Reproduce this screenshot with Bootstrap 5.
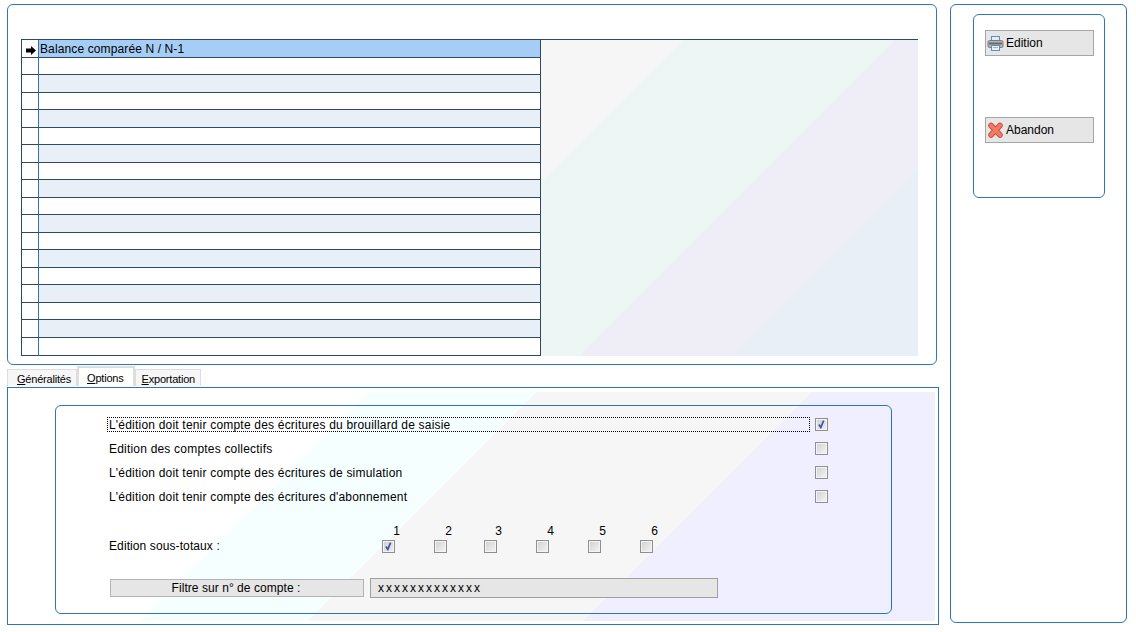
<!DOCTYPE html>
<html lang="fr">
<head>
<meta charset="utf-8">
<title>Balance comparée</title>
<link href="https://cdn.jsdelivr.net/npm/bootstrap@5.3.0/dist/css/bootstrap.min.css" rel="stylesheet">
<style>
html,body{width:1136px;height:632px;overflow:hidden;background:#fff}
body{font-family:"Liberation Sans",Arial,sans-serif;font-size:12px;line-height:14px;color:#000}
.app-shell{height:632px;padding:4px 0 0 7px}
.left-col{width:932px}
.frame-blue{border:1px solid #2e75b6;border-radius:6px}
.top-panel{width:930px;height:361px;padding:34px 18px 0 13px}
.grid-area{border-top:1px solid #2f4a5c;width:897px;height:317px}
.list-grid{width:520px;border-collapse:separate;border-spacing:0;table-layout:fixed;height:316px;border-left:1px solid #2f4a5c;border-right:1px solid #2f4a5c}
.list-grid td{padding:0 0 0 1px;border-bottom:1px solid #2f4a5c;height:18px;font-size:12px;line-height:16px;letter-spacing:.12px;white-space:nowrap;overflow:hidden}
.list-grid tr:nth-child(even) td{height:17px}
.list-grid tr:last-child td{height:18px}
.list-grid td.marker{width:17px;padding:0;border-right:1px solid #2e75b6;text-align:center;background:#fff}
.list-grid tr:nth-child(odd):not(:first-child) td:last-child{background:#e8eff7}
.list-grid tr:first-child td:last-child{background:#a5cdf5}
.marker svg{display:block;margin:3px 0 0 4px}
.top-deco{flex:1;height:316px;background:linear-gradient(135deg,#f6f6f6 20.6%,#eef6f5 20.6%,#eef6f5 51.1%,#efeef7 51.1%,#efeef7 73%,#e8eff7 73%)}
.tab-strip{height:23px;padding-top:3px;border:0;margin:0}
.tab-strip .nav-link{font-size:11px;line-height:13px;color:#000;padding:3px 5px 0 9px;height:17px;margin:0;margin-top:1px;border:1px solid #ddd;border-bottom:0;border-radius:0;background:#f6f6f6;letter-spacing:-.2px}
.tab-strip .nav-link.active{height:20px;margin-top:-2px;padding:4px 9px 0 8px;background:#fff;color:#000;border:2px solid #ddd;border-bottom:0;position:relative;z-index:2}
.tab-strip .nav-item:last-child .nav-link{padding:3px 5px 0 6px}
.tab-body{width:932px;height:238px;border:1px solid #2e75b6;padding:4px 3px 3px 0;margin-top:-1px;border-radius:0;position:relative}
.tab-deco{height:229px;padding:13px 0 0 47px;background:linear-gradient(135deg,#fff 31.3%,#f5ffff 31.3%,#f5ffff 45.7%,#f6f6f6 45.7%,#f6f6f6 69.6%,#efefff 69.6%)}
.opt-group{width:837px;height:209px;padding:11px 0 0 51px}
.opt-row{height:24px;width:722px;display:flex;align-items:flex-start}
.opt-label{width:703px;height:15px;padding:0 0 0 1px;line-height:14px;letter-spacing:.2px;border:1px dotted transparent;white-space:nowrap}
.opt-label.has-focus{border-color:#000}
.opt-box.form-check-input{width:13px;height:13px;margin:1px 0 0 5px;flex:none}
.opt-box.form-check-input,.sub-cell .form-check-input{border:1px solid #8f8f8f;border-radius:0;background-color:#e8e8e8;background-image:linear-gradient(135deg,#cfcfcf,#f6f6f6);box-shadow:inset 0 0 0 1px #f4f4f4;opacity:1}
.opt-box.form-check-input:checked,.sub-cell .form-check-input:checked{background-color:#e8e8e8;border-color:#8f8f8f;background-image:url("data:image/svg+xml,%3Csvg xmlns='http://www.w3.org/2000/svg' viewBox='0 0 13 13'%3E%3Cpath d='M3.500 6.500l2.200 3.500 3.300-8' fill='none' stroke='%233d55a5' stroke-width='2'/%3E%3C/svg%3E"),linear-gradient(135deg,#cfcfcf,#f0f0f0)}
.sub-row{margin-top:12px;height:34px;width:610px}
.sub-label{width:275px;padding:14px 0 0 2px;line-height:14px;letter-spacing:.1px}
.sub-cell{width:13px;display:flex;flex-direction:column;align-items:center;margin-right:39px}
.sub-cell:nth-child(3){margin-right:37px}
.sub-num{height:15px;line-height:13px;white-space:nowrap;margin-left:16px;font-size:12px}
.sub-cell .form-check-input{width:13px;height:13px;margin:0;flex:none}
.filter-row{margin-top:19px;width:620px}
.filter-label{width:254px;height:18px;margin:1px 6px 0 3px;padding-right:2px;background:#e6e6e6;border:1px solid #b4b4b4;text-align:center;line-height:16px;letter-spacing:.05px}
.filter-value{width:348px;height:20px;background:#e6e6e6;border:1px solid #a0a0a0;border-radius:0;padding:0 0 0 7px;font-size:12px;line-height:18px;letter-spacing:2px;color:#000;box-shadow:none}
.right-panel{width:177px;height:619px;margin-left:11px;padding:9px 0 0 22px}
.action-box{width:132px;height:184px;padding:15px 0 0 11px}
.action-btn.btn{display:flex;align-items:center;width:109px;height:26px;padding:0 0 0 1px;background:#e6e6e6;border:1px solid #a6a6a6;border-radius:0;color:#000;font-size:12px;line-height:14px;text-align:left}
.action-btn svg{flex:none;margin-right:2px}
.second-btn{margin-top:61px}
.tab-strip u{text-decoration:underline}
</style>
</head>
<body>
<div class="app-shell d-flex align-items-start">
  <div class="left-col">
    <div class="top-panel frame-blue">
      <div class="grid-area d-flex">
        <table class="list-grid">
          <tbody>
            <tr><td class="marker"><svg width="11" height="11" viewBox="0 0 11 11"><path d="M0 3.500h5V1l5 4.500L5 10V7.500H0z" fill="#000"/></svg></td><td>Balance comparée N / N-1</td></tr>
            <tr><td class="marker"></td><td></td></tr>
            <tr><td class="marker"></td><td></td></tr>
            <tr><td class="marker"></td><td></td></tr>
            <tr><td class="marker"></td><td></td></tr>
            <tr><td class="marker"></td><td></td></tr>
            <tr><td class="marker"></td><td></td></tr>
            <tr><td class="marker"></td><td></td></tr>
            <tr><td class="marker"></td><td></td></tr>
            <tr><td class="marker"></td><td></td></tr>
            <tr><td class="marker"></td><td></td></tr>
            <tr><td class="marker"></td><td></td></tr>
            <tr><td class="marker"></td><td></td></tr>
            <tr><td class="marker"></td><td></td></tr>
            <tr><td class="marker"></td><td></td></tr>
            <tr><td class="marker"></td><td></td></tr>
            <tr><td class="marker"></td><td></td></tr>
            <tr><td class="marker"></td><td></td></tr>
          </tbody>
        </table>
        <div class="top-deco"></div>
      </div>
    </div>
    <ul class="nav nav-tabs tab-strip">
      <li class="nav-item"><a class="nav-link" href="#"><u>G</u>énéralités</a></li>
      <li class="nav-item"><a class="nav-link active" href="#"><u>O</u>ptions</a></li>
      <li class="nav-item"><a class="nav-link" href="#"><u>E</u>xportation</a></li>
    </ul>
    <div class="tab-body">
      <div class="tab-deco">
        <div class="opt-group frame-blue">
          <div class="opt-row"><div class="opt-label has-focus">L'édition doit tenir compte des écritures du brouillard de saisie</div><input class="form-check-input opt-box" type="checkbox" checked></div>
          <div class="opt-row"><div class="opt-label">Edition des comptes collectifs</div><input class="form-check-input opt-box" type="checkbox"></div>
          <div class="opt-row"><div class="opt-label">L'édition doit tenir compte des écritures de simulation</div><input class="form-check-input opt-box" type="checkbox"></div>
          <div class="opt-row"><div class="opt-label">L'édition doit tenir compte des écritures d'abonnement</div><input class="form-check-input opt-box" type="checkbox"></div>
          <div class="sub-row d-flex">
            <div class="sub-label">Edition sous-totaux :</div>
            <div class="sub-cell"><span class="sub-num">1</span><input class="form-check-input" type="checkbox" checked></div>
            <div class="sub-cell"><span class="sub-num">2</span><input class="form-check-input" type="checkbox"></div>
            <div class="sub-cell"><span class="sub-num">3</span><input class="form-check-input" type="checkbox"></div>
            <div class="sub-cell"><span class="sub-num">4</span><input class="form-check-input" type="checkbox"></div>
            <div class="sub-cell"><span class="sub-num">5</span><input class="form-check-input" type="checkbox"></div>
            <div class="sub-cell"><span class="sub-num">6</span><input class="form-check-input" type="checkbox"></div>
          </div>
          <div class="filter-row d-flex">
            <div class="filter-label">Filtre sur n° de compte :</div>
            <div class="filter-value">xxxxxxxxxxxxx</div>
          </div>
        </div>
      </div>
    </div>
  </div>
  <div class="right-panel frame-blue">
    <div class="action-box frame-blue">
      <button class="btn action-btn" type="button"><svg width="17" height="17" viewBox="0 0 17 17"><rect x="4.500" y="1.500" width="8" height="5" fill="#e2edf8" stroke="#5f8fbf"/><rect x="1" y="5.500" width="15" height="7" rx="1.500" fill="#b4b4b4" stroke="#7a7a7a"/><rect x="2" y="7.500" width="13" height="2" fill="#6a6a6a"/><rect x="4.500" y="10.500" width="8" height="5" fill="#e8f0f9" stroke="#5f8fbf"/><path d="M6 12.500h5" stroke="#9fb8d2"/></svg>Edition</button>
      <button class="btn action-btn second-btn" type="button"><svg width="17" height="17" viewBox="0 0 17 17"><path d="M4 3.500l9 9.500M13 3.500L4 13" stroke="#c9493a" stroke-width="5.500" stroke-linecap="round" fill="none"/><path d="M4 3.500l9 9.500M13 3.500L4 13" stroke="#f27b67" stroke-width="3.800" stroke-linecap="round" fill="none"/></svg>Abandon</button>
    </div>
  </div>
</div>
<script src="https://cdn.jsdelivr.net/npm/bootstrap@5.3.0/dist/js/bootstrap.bundle.min.js"></script>
</body>
</html>
